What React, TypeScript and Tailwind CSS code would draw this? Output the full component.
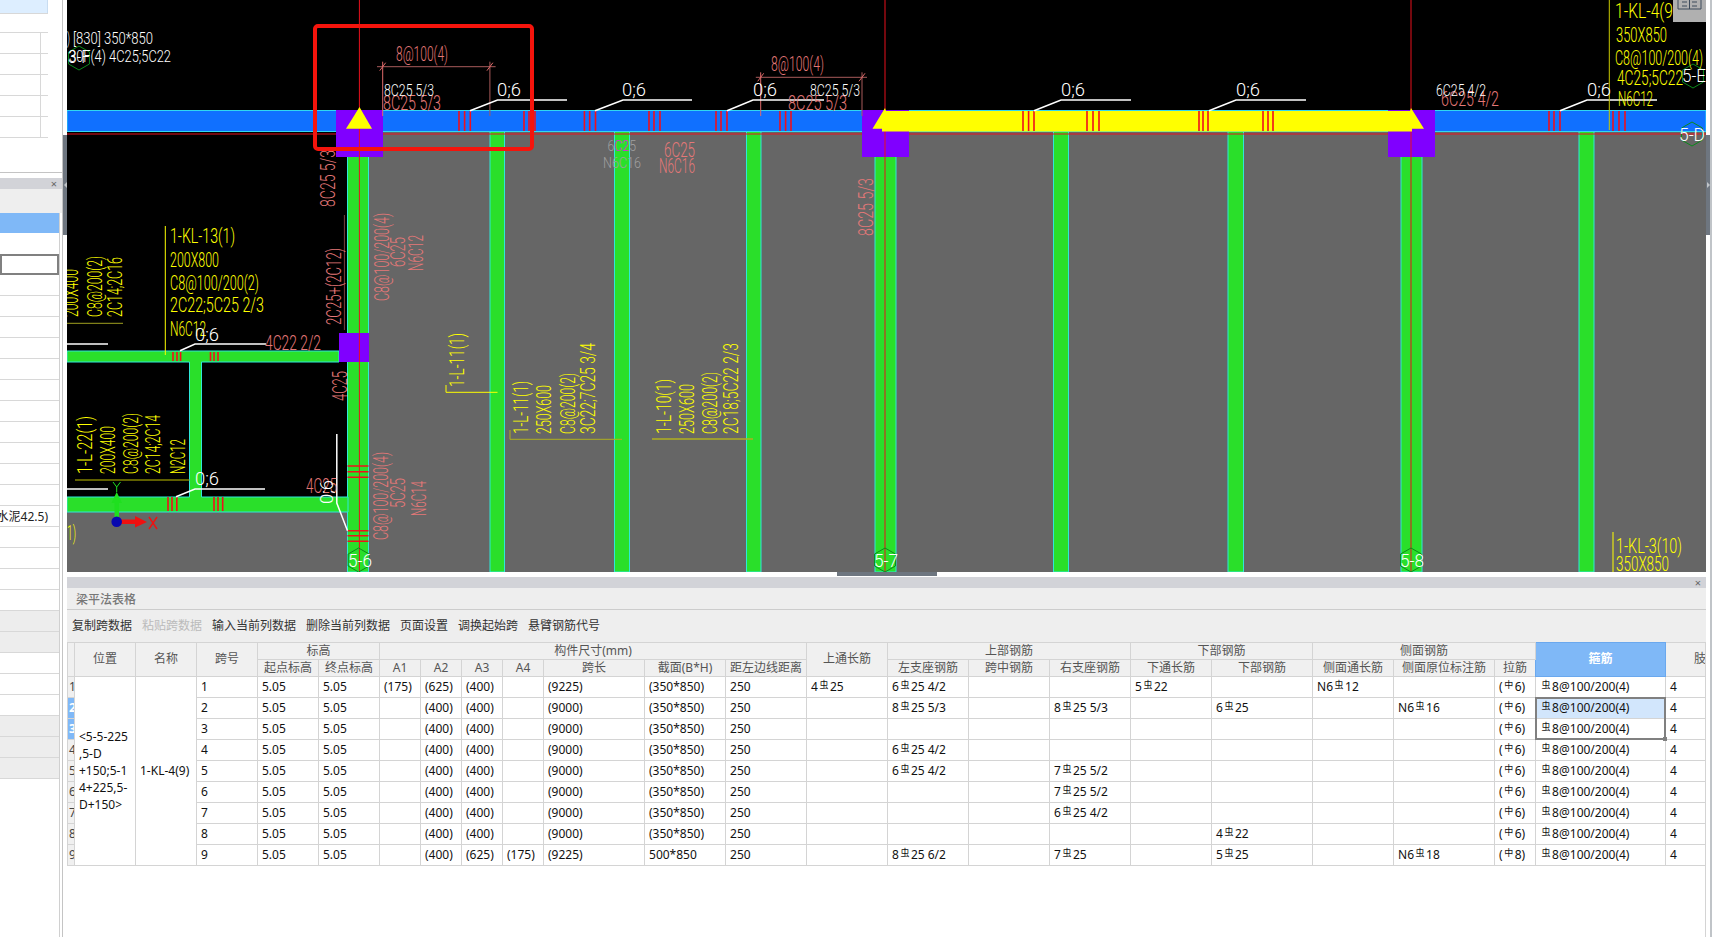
const YELLOW = "#ffff00";
const PINK = "#e57878";
const WHITE = "#ffffff";
const CAD_FONT = "Roboto, 'Liberation Sans', sans-serif";

type Label = [string, number, number, number, number?];

// [text, baseline x, baseline y, length, font size]
const flatWhite: Label[] = [
  ["[830] 350*850", 73, 44, 80, 17],
  [")", 67, 44, 3, 17],
  ["30F(4) 4C25;5C22", 69, 62, 102, 17],
  ["3-F", 68, 63, 22, 19],
  ["8C25 5/3", 384, 96, 50, 16],
  ["8C25 5/3", 810, 96, 50, 16],
  ["6C25 4/2", 1436, 96, 50, 16],
  ["0;6", 497, 96, 24, 19],
  ["0;6", 622, 96, 24, 19],
  ["0;6", 753, 96, 24, 19],
  ["0;6", 1061, 96, 24, 19],
  ["0;6", 1236, 96, 24, 19],
  ["0;6", 1587, 96, 24, 19],
  ["0;6", 195, 341, 24, 19],
  ["0;6", 195, 485, 24, 19],
  ["5-E", 1682, 82, 24, 19],
  ["5-D", 1679, 141, 26, 19],
  ["5-6", 348, 567, 24, 19],
  ["5-7", 874, 567, 24, 19],
  ["5-8", 1400, 567, 24, 19],
];

const flatPink: Label[] = [
  ["8@100(4)", 396, 61, 52],
  ["8@100(4)", 771, 71, 53],
  ["8C25 5/3", 383, 110, 58],
  ["8C25 5/3", 788, 110, 59],
  ["6C25 4/2", 1441, 106, 58],
  ["6C25", 664, 157, 31],
  ["N6C16", 659, 173, 36],
  ["4C22 2/2", 265, 350, 56],
  ["4C25", 306, 493, 31],
];

const flatYellow: Label[] = [
  ["1-KL-13(1)", 170, 243, 65],
  ["200X800", 170, 267, 49],
  ["C8@100/200(2)", 170, 290, 89],
  ["2C22;5C25 2/3", 170, 312, 94],
  ["N6C12", 170, 336, 36],
  ["1-KL-4(9", 1615, 18, 58],
  ["350X850", 1616, 42, 51],
  ["C8@100/200(4)", 1615, 65, 88],
  ["4C25;5C22", 1617, 85, 66],
  ["N6C12", 1618, 106, 35],
  ["1-KL-3(10)", 1616, 553, 66],
  ["350X850", 1616, 571, 53],
  ["1)", 67, 540, 9],
];

const upPink: Label[] = [
  ["8C25 5/3", 335, 207, 57],
  ["2C25+(2C12)", 341, 325, 77],
  ["4C25", 347, 401, 30],
  ["C8@100/200(4)", 389, 301, 88],
  ["6C25", 405, 267, 30],
  ["N6C12", 423, 271, 36],
  ["C8@100/200(4)", 388, 540, 88],
  ["5C25", 405, 508, 30],
  ["N6C14", 426, 516, 35],
  ["8C25 5/3", 873, 236, 58],
];

const upYellow: Label[] = [
  ["200X400", 78, 317, 48],
  ["C8@200(2)", 102, 317, 61],
  ["2C14;2C16", 122, 317, 60],
  ["1-L-22(1)", 92, 474, 58],
  ["200X400", 115, 474, 48],
  ["C8@200(2)", 138, 474, 61],
  ["2C14;2C14", 160, 474, 59],
  ["N2C12", 185, 474, 35],
  ["1-L-11(1)", 464, 387, 54],
  ["1-L-11(1)", 528, 434, 53],
  ["250X600", 551, 434, 49],
  ["C8@200(2)", 575, 434, 61],
  ["3C22;7C25 3/4", 595, 434, 91],
  ["1-L-10(1)", 671, 434, 55],
  ["250X600", 694, 434, 50],
  ["C8@200(2)", 717, 434, 62],
  ["2C18;5C22 2/3", 738, 434, 91],
];

const columns = [
  [490, 504.5],
  [614.5, 629.5],
  [746.5, 761],
  [1053.5, 1068.5],
  [1228, 1243.5],
  [1579, 1594],
  [875, 896],
  [1401, 1422],
  [347.5, 368.5],
];

const leaders = [
  "470,110.7 497.5,100 567,100",
  "595,110.7 623,100 692,100",
  "727,110.7 753,100 824,100",
  "1034,110.7 1061,100 1131,100",
  "1209,110.7 1236,100 1306,100",
  "1560,110.7 1587,100 1657,100",
  "180,350.7 195,344 266,344",
  "176,496.7 195,489 265,489",
  "347.5,530.7 336.8,503 336.8,434",
  "67,344 108,344",
  "67,489 108,489",
];

const beamTicks = [459, 464.6, 470.3, 524, 529, 535, 584.4, 589.7, 595.5, 649, 654, 660, 716, 721, 727, 780, 785.6, 791, 1023, 1028.6, 1034, 1087, 1093, 1099, 1199, 1203, 1208, 1263, 1268, 1273, 1549, 1554, 1560, 1613, 1619, 1625];

function hexagon(cx: number, cy: number, r = 12) {
  return [[0, -r], [r * 0.87, -r / 2], [r * 0.87, r / 2], [0, r], [-r * 0.87, r / 2], [-r * 0.87, -r / 2]]
    .map(([a, b]) => `${cx + a},${cy + b}`)
    .join(" ");
}

function Labels({ items, fill, up }: { items: Label[]; fill: string; up?: boolean }) {
  return (
    <g fill={fill} fontFamily={CAD_FONT} fontWeight="300">
      {items.map(([text, x, y, w, size], i) => (
        <text
          key={i}
          x={x}
          y={y}
          fontSize={size ?? 21}
          textLength={w}
          lengthAdjust="spacingAndGlyphs"
          transform={up ? `rotate(-90 ${x} ${y})` : undefined}
        >
          {text}
        </text>
      ))}
    </g>
  );
}

function Dimension({ x1, x2, y, left, right }: { x1: number; x2: number; y: number; left: number; right: number }) {
  return (
    <g fill="none">
      <line x1={x1} x2={x2} y1={y} y2={y} stroke="#a85a5a" />
      <line x1={left} x2={left} y1={y - 5} y2={116} stroke="#e06a6a" />
      <line x1={right} x2={right} y1={y - 5} y2={116} stroke="#a85a5a" />
      <path d={`M${left - 3} ${y + 4}l6 -8M${right - 3} ${y + 4}l6 -8`} stroke="#e06a6a" />
    </g>
  );
}

function Drawing() {
  return (
    <svg viewBox="67 0 1639 572" className="block w-[1639px] h-[572px]">
      <rect x="368" y="132" width="1338" height="440" fill="#666666" />
      <rect x="67" y="512" width="282" height="60" fill="#666666" />

      {columns.map(([a, b]) => (
        <rect key={a} x={a} y="131" width={b - a} height="441" fill="#2adf2a" stroke="#2fe8d8" strokeWidth="1" />
      ))}
      <path d="M67 351H339V362H201.5V497H348V512H67V497H189.5V362H67Z" fill="#2adf2a" stroke="#2fe8d8" />

      <rect x="67" y="110.5" width="1639" height="21" fill="#1070ff" stroke="#30d8f0" />
      <line x1="67" x2="1706" y1="134" y2="134" stroke="#e8101c" />

      <rect x="336" y="110" width="47" height="47" fill="#8000ff" />
      <rect x="862" y="110" width="47" height="47" fill="#8000ff" />
      <rect x="1388" y="110" width="47" height="47" fill="#8000ff" />
      <rect x="339" y="333" width="30" height="29" fill="#8000ff" />

      <g stroke="#e8101c">
        <line x1="359.4" x2="359.4" y1="0" y2="572" />
        <line x1="885" x2="885" y1="0" y2="572" />
        <line x1="1411" x2="1411" y1="0" y2="572" />
      </g>

      <polygon points="359.5,107 346,128.7 372,128.7" fill={YELLOW} />
      <polygon
        points="885,108 872.5,128.7 882,128.7 882,131.5 1412,131.5 1412,128.7 1424,128.7 1411,108 1410,111 886,111"
        fill={YELLOW}
      />

      <g stroke="#f0101c" strokeWidth="1.6">
        {beamTicks.map((x) => (
          <line key={x} x1={x} x2={x} y1="111" y2="131" />
        ))}
        <path d="M173 352V361M177 352V361M180.6 352V361M210.5 352V361M214 352V361M218 352V361M168 497V511M172 497V511M176.8 497V511M214 497V511M218 497V511M222.7 497V511" />
        <path d="M347.5 466H368.5M347.5 471.7H368.5M347.5 477.3H368.5M347.5 530.7H368.5M347.5 535.7H368.5M347.5 541.3H368.5" />
      </g>

      <Dimension x1={377} x2={495.6} y={66.7} left={382.7} right={489.9} />
      <Dimension x1={755.8} x2={867} y={77.3} left={760.7} right={862} />

      <g fill="none" stroke="#ffffff" strokeWidth="1.5">
        {leaders.map((p) => (
          <polyline key={p} points={p} />
        ))}
      </g>

      <g fill="none" stroke="#ffff00">
        <line x1="165.3" x2="165.3" y1="226" y2="355" />
        <line x1="1609.3" x2="1609.3" y1="0" y2="130" stroke="#c8c800" />
        <line x1="1613" x2="1613" y1="532" y2="572" />
        <path d="M446 385V392.3H497.5" />
        <path d="M510 430V439.3H622" stroke="#b0b020" />
        <path d="M652 439H753" stroke="#b0b020" strokeWidth="1.5" />
        <path d="M67 323.3H123" stroke="#a0a020" />
        <path d="M75 480H189.4" stroke="#808000" strokeWidth="1.5" />
      </g>
      <line x1="344.4" x2="344.4" y1="215" y2="330" stroke="#7a4040" />

      <g fill="none" stroke="#0a8a1a">
        <polygon points={hexagon(79, 58)} />
        <polygon points={hexagon(1693, 76)} />
        <polygon points={hexagon(1692, 134)} />
        <polygon points={hexagon(358.6, 560)} />
        <polygon points={hexagon(885, 560)} />
        <polygon points={hexagon(1411, 560)} />
      </g>

      <Labels items={upPink} fill={PINK} up />
      <Labels items={upYellow} fill={YELLOW} up />
      <Labels items={flatPink} fill={PINK} />
      <Labels items={flatYellow} fill={YELLOW} />
      <Labels items={flatWhite} fill={WHITE} />
      <Labels items={[["0;6", 333, 504, 24, 19]]} fill={WHITE} up />

      <g fontFamily={CAD_FONT} fontWeight="300" fontSize="15">
        <text x="607.5" y="151" textLength="28.5" lengthAdjust="spacingAndGlyphs" fill="#a0a0a0">
          6<tspan fill="#e020e0">C2</tspan>5
        </text>
        <text x="603" y="168" textLength="38" lengthAdjust="spacingAndGlyphs" fill="#a0a0a0">
          N6C16
        </text>
      </g>

      {/* coordinate axes */}
      <rect x="114.5" y="503" width="4.5" height="14" fill="#1fe01f" />
      <polygon points="116.7,492 122,503 111.5,503" fill="#1fe01f" />
      <path d="M113 482L116.7 487L120.5 482M116.7 487V492" fill="none" stroke="#1fe01f" />
      <rect x="120" y="519.5" width="16" height="4.5" fill="#f01010" />
      <polygon points="147,522 135,516 135,527.5" fill="#f01010" />
      <path d="M149 517L157 529M157 517L149 529" fill="none" stroke="#f01010" strokeWidth="1.4" />
      <circle cx="116.7" cy="521.7" r="5.3" fill="#0808b0" />

      {/* view-cube stub */}
      <rect x="1673" y="0" width="33" height="22" fill="#b0b0b0" />
      <path d="M1678 0V9H1701V0M1682 2H1687M1682 6H1687M1692 2H1697M1692 6H1697M1689.5 0V9" fill="none" stroke="#3c4a5a" />

      <rect x="315" y="26" width="217" height="123" rx="3" fill="none" stroke="#f5140c" strokeWidth="4" />
    </svg>
  );
}

function LeftPanel() {
  const rows = Array.from({ length: 24 }, (_, i) => i);
  return (
    <div className="w-[63px] shrink-0 h-full border-r border-[#c4c4c4] overflow-hidden">
      <div className="h-[13px] w-[48px] bg-[#ddeeff] border-r border-[#c8dcf0]" />
      <div className="h-[20px] w-[48px] border-b border-t border-[#d8d8d8]" />
      {[0, 1, 2, 3, 4].map((i) => (
        <div key={i} className="h-[21px] w-[48px] border-b border-[#d8d8d8] pr-[7px]">
          <div className="h-full border-r border-[#d8d8d8]" />
        </div>
      ))}
      <div className="h-[35px] border-b border-[#c4c4c4]" />
      <div className="h-[5px]" />
      <div className="h-[11px] bg-[#d2d3d8] flex items-center justify-end pr-[5px] text-[11px] leading-none text-[#666]">×</div>
      <div className="h-[24px] bg-[#eeeeee]" />
      <div className="w-[60px] border-r border-[#d0d0d0]">
        <div className="h-[20px] bg-[#7fb8f7]" />
        <div className="h-[21px]" />
        <div className="h-[21px] border-2 border-[#808080]" />
        {rows.map((i) => (
          <div
            key={i}
            className={`h-[21px] border-b border-[#d8d8d8] text-[12px] leading-[21px] whitespace-nowrap overflow-hidden text-[#222] flex justify-end ${
              i === 16 || i === 17 || i >= 21 ? "bg-[#ededed]" : "bg-white"
            }`}
          >
            {i === 11 ? <span className="pr-[11px]">水泥42.5)</span> : null}
          </div>
        ))}
        <div className="h-[200px]" />
      </div>
    </div>
  );
}

function Splitter({ arrow }: { arrow: "left" | "right" }) {
  return (
    <div className="w-[4px] shrink-0 pt-[135px]">
      <div className="h-[100px] bg-[#6e7680] flex items-center justify-center">
        <div
          className={
            arrow === "left"
              ? "w-0 h-0 border-y-[3px] border-y-transparent border-r-[3px] border-r-[#c0c4c8]"
              : "w-0 h-0 border-y-[3px] border-y-transparent border-l-[3px] border-l-[#c0c4c8]"
          }
        />
      </div>
    </div>
  );
}

function Rebar({ text }: { text: string }) {
  const parts = text.split(/(虫|中)/);
  return (
    <>
      {parts.map((p, i) =>
        p === "虫" || p === "中" ? (
          <span key={i} className="text-[9px] px-[1.5px] align-[3px]">
            {p}
          </span>
        ) : (
          <span key={i}>{p}</span>
        )
      )}
    </>
  );
}

const colWidths = [7, 61, 61, 61, 61, 61, 41, 41, 41, 41, 101, 81, 81, 81, 81, 81, 81, 81, 101, 81, 101, 41, 130, 81];

type Row = { a: (string | null)[]; len: string; sec?: string; top?: string; l?: string; r?: string; bt?: string; b?: string; st?: string; sn?: string; tie?: string };

const tableRows: Row[] = [
  { a: ["(175)", "(625)", "(400)", ""], len: "(9225)", top: "4虫25", l: "6虫25 4/2", bt: "5虫22", st: "N6虫12" },
  { a: ["", "(400)", "(400)", ""], len: "(9000)", l: "8虫25 5/3", r: "8虫25 5/3", b: "6虫25", sn: "N6虫16" },
  { a: ["", "(400)", "(400)", ""], len: "(9000)" },
  { a: ["", "(400)", "(400)", ""], len: "(9000)", l: "6虫25 4/2" },
  { a: ["", "(400)", "(400)", ""], len: "(9000)", l: "6虫25 4/2", r: "7虫25 5/2" },
  { a: ["", "(400)", "(400)", ""], len: "(9000)", r: "7虫25 5/2" },
  { a: ["", "(400)", "(400)", ""], len: "(9000)", r: "6虫25 4/2" },
  { a: ["", "(400)", "(400)", ""], len: "(9000)", b: "4虫22" },
  { a: ["", "(400)", "(625)", "(175)"], len: "(9225)", sec: "500*850", l: "8虫25 6/2", r: "7虫25", b: "5虫25", sn: "N6虫18", tie: "(中8)" },
];

const th = "border border-[#d4d4d4] bg-[#f0f0f0] font-normal text-[#555] text-center p-0 leading-none overflow-hidden whitespace-nowrap";
const td = "border border-[#d4d4d4] pl-[4px] pr-0 py-0 text-[#111] leading-none overflow-hidden whitespace-nowrap";

function BeamTable() {
  return (
    <div className="relative h-[296px] overflow-hidden border-r border-[#d4d4d4]">
      <table className="table-fixed w-[1679px] border-collapse text-[12px]">
        <colgroup>
          {colWidths.map((w, i) => (
            <col key={i} width={w} />
          ))}
        </colgroup>
        <thead>
          <tr className="h-[17px]">
            <th rowSpan={2} className={th} />
            <th rowSpan={2} className={th}>位置</th>
            <th rowSpan={2} className={th}>名称</th>
            <th rowSpan={2} className={th}>跨号</th>
            <th colSpan={2} className={th}>标高</th>
            <th colSpan={7} className={th}>构件尺寸(mm)</th>
            <th rowSpan={2} className={th}>上通长筋</th>
            <th colSpan={3} className={th}>上部钢筋</th>
            <th colSpan={2} className={th}>下部钢筋</th>
            <th colSpan={3} className={th}>侧面钢筋</th>
            <th rowSpan={2} className="border border-[#6aa8ee] bg-[#7fb8f7] text-white font-bold text-center p-0">箍筋</th>
            <th rowSpan={2} className={th}>肢数</th>
          </tr>
          <tr className="h-[17px]">
            {["起点标高", "终点标高", "A1", "A2", "A3", "A4", "跨长", "截面(B*H)", "距左边线距离", "左支座钢筋", "跨中钢筋", "右支座钢筋", "下通长筋", "下部钢筋", "侧面通长筋", "侧面原位标注筋", "拉筋"].map((h) => (
              <th key={h} className={th}>{h}</th>
            ))}
          </tr>
        </thead>
        <tbody>
          {tableRows.map((row, i) => (
            <tr key={i} className="h-[21px]">
              <td
                className={`border border-[#d4d4d4] p-0 pl-px leading-none overflow-hidden ${
                  i === 1 || i === 2 ? "bg-[#7fb8f7] text-white font-bold" : "bg-[#f0f0f0] text-[#444]"
                }`}
              >
                {i + 1}
              </td>
              {i === 0 ? (
                <>
                  <td rowSpan={9} className={td}>
                    <div className="leading-[17px]">
                      <div>&lt;5-5-225</div>
                      <div>,5-D</div>
                      <div>+150;5-1</div>
                      <div>4+225,5-</div>
                      <div>D+150&gt;</div>
                    </div>
                  </td>
                  <td rowSpan={9} className={td}>1-KL-4(9)</td>
                </>
              ) : null}
              <td className={td}>{i + 1}</td>
              <td className={td}>5.05</td>
              <td className={td}>5.05</td>
              {row.a.map((v, j) => (
                <td key={j} className={td}>{v}</td>
              ))}
              <td className={td}>{row.len}</td>
              <td className={td}>{row.sec ?? "(350*850)"}</td>
              <td className={td}>250</td>
              <td className={td}><Rebar text={row.top ?? ""} /></td>
              <td className={td}><Rebar text={row.l ?? ""} /></td>
              <td className={td} />
              <td className={td}><Rebar text={row.r ?? ""} /></td>
              <td className={td}><Rebar text={row.bt ?? ""} /></td>
              <td className={td}><Rebar text={row.b ?? ""} /></td>
              <td className={td}><Rebar text={row.st ?? ""} /></td>
              <td className={td}><Rebar text={row.sn ?? ""} /></td>
              <td className={td}><Rebar text={row.tie ?? "(中6)"} /></td>
              <td className={`${td} ${i === 1 ? "bg-[#d2e6fc]" : ""}`}><Rebar text="虫8@100/200(4)" /></td>
              <td className={td}>4</td>
            </tr>
          ))}
        </tbody>
      </table>
      {/* selected cell range */}
      <div className="absolute left-[1468px] top-[55px] w-[131px] h-[43px] border-2 border-[#808080] pointer-events-none" />
      <div className="absolute left-[1596px] top-[95px] w-[4px] h-[4px] bg-[#808080]" />
    </div>
  );
}

export default function App() {
  const tools = ["复制跨数据", "粘贴跨数据", "输入当前列数据", "删除当前列数据", "页面设置", "调换起始跨", "悬臂钢筋代号"];
  return (
    <div className="w-[1719px] h-[937px] overflow-hidden flex bg-white [font-family:'Noto_Sans','Noto_Sans_CJK_SC',sans-serif]">
      <LeftPanel />
      <Splitter arrow="left" />
      <div className="w-[1639px] shrink-0 flex flex-col">
        <div className="h-[572px] bg-black">
          <Drawing />
        </div>
        <div className="h-[5px] flex justify-center">
          <div className="w-[100px] h-[4px] bg-[#6e7680]" />
        </div>
        <div className="h-[11px] bg-[#d2d3d8] flex items-center justify-end pr-[5px] text-[11px] leading-none text-[#666]">×</div>
        <div className="h-[22px] bg-[#eeeeee] border-b border-[#cccccc] flex items-center pl-[9px] pt-[3px] text-[12px] font-medium text-[#777]">梁平法表格</div>
        <div className="h-[32px] bg-[#eeeeee] flex items-center gap-[10px] pl-[5px] text-[12px] text-[#333]">
          {tools.map((t, i) => (
            <span key={t} className={i === 1 ? "text-[#bbbbbb]" : ""}>{t}</span>
          ))}
        </div>
        <BeamTable />
        <div className="flex-1 min-h-0 border-r border-[#d4d4d4]">
          <div className="w-[8px] h-full bg-[#f0f0f0] border-x border-[#d4d4d4]" />
        </div>
      </div>
      <Splitter arrow="right" />
      <div className="w-[2px] shrink-0 bg-[#c0c4c8]" />
    </div>
  );
}
